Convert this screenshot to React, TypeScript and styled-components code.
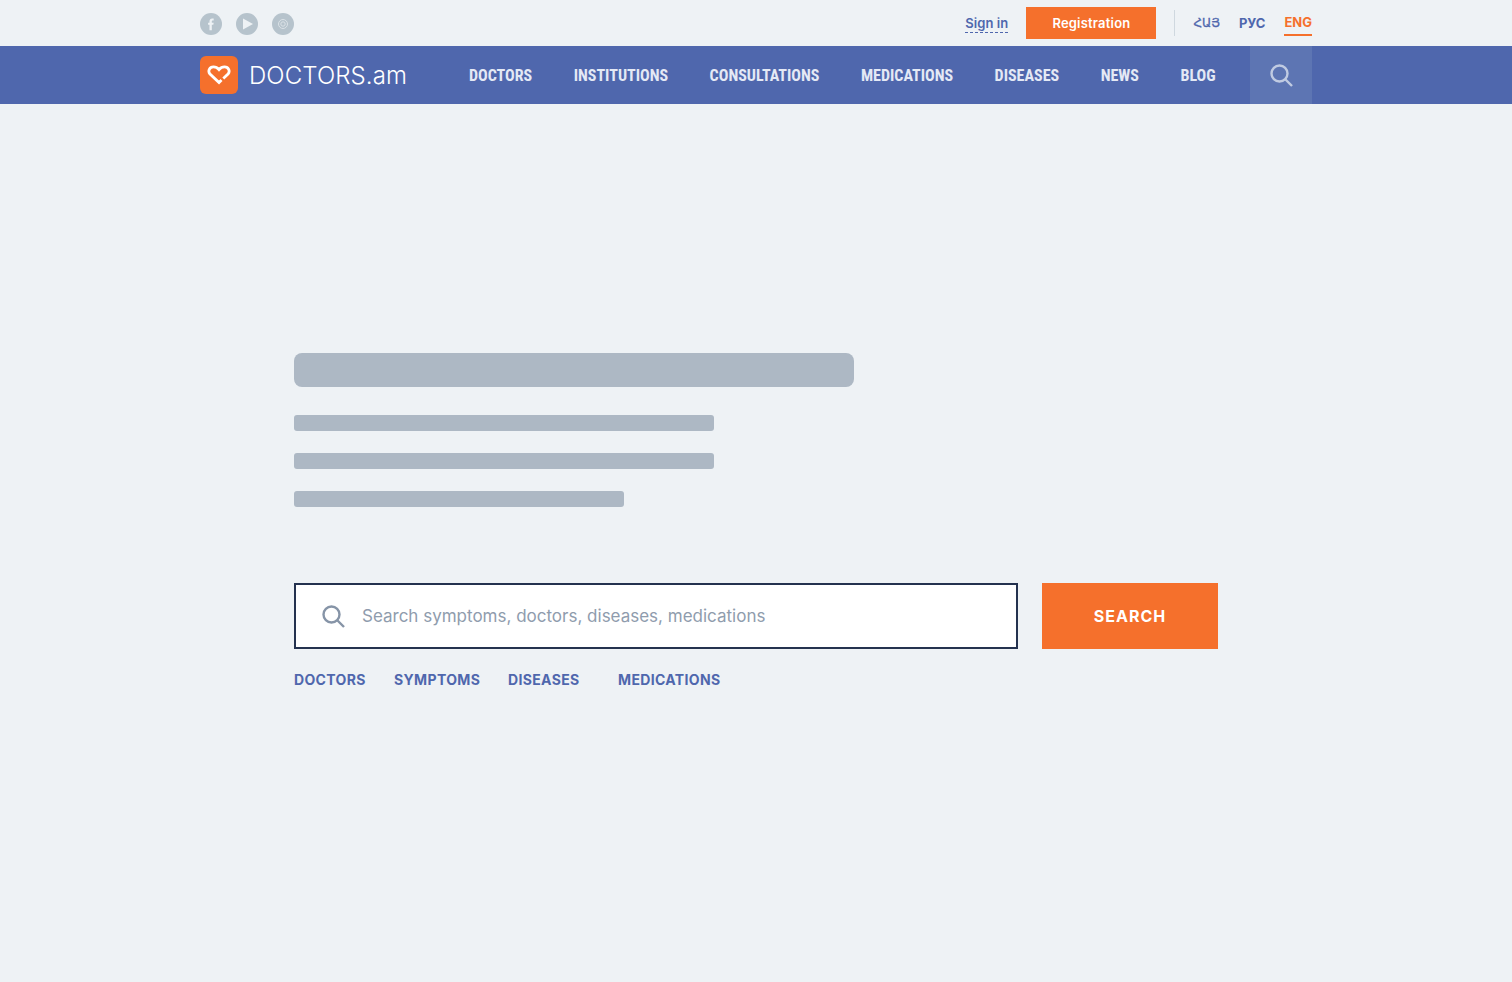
import React from 'react'
import styled, { createGlobalStyle } from 'styled-components'

const GlobalStyle = createGlobalStyle`
  html, body {
    margin: 0;
    padding: 0;
    height: 100%;
    background: #eef2f5;
    font-family: Inter, "Noto Sans", sans-serif;
  }
`

const Page = styled.div`
  min-height: 982px;
  background: #eef2f5;
`

const Container = styled.div`
  width: 1112px;
  margin: 0 auto;
  display: flex;
  align-items: center;
  height: 100%;
`

const TopBar = styled.div`
  height: 46px;
`

const Socials = styled.div`
  display: flex;
  gap: 14px;
  margin-right: auto;
  padding-top: 2px;
`

const Social = styled.a`
  width: 22px;
  height: 22px;
  border-radius: 50%;
  background: #b6c3cc;
  display: flex;
  align-items: center;
  justify-content: center;
`

const SignIn = styled.a`
  font-size: 13px;
  font-weight: 600;
  line-height: 16px;
  letter-spacing: 0.1px;
  padding: 2px 0 1px;
  color: #4f67ad;
  border-bottom: 1px dashed #4f67ad;
  margin-right: 18px;
`

const Register = styled.a`
  width: 130px;
  height: 32px;
  margin-right: 18px;
  background: #f5702c;
  color: #fff;
  font-size: 13px;
  font-weight: 600;
  letter-spacing: 0.2px;
  display: flex;
  align-items: center;
  justify-content: center;
`

const Divider = styled.div`
  width: 1px;
  height: 26px;
  background: #cfd8df;
  margin-right: 18px;
`

const Langs = styled.div`
  display: flex;
  align-items: center;
  gap: 19px;
`

const Lang = styled.a<{ $active?: boolean }>`
  font-size: 13px;
  font-weight: 700;
  line-height: 16px;
  padding: ${p => (p.$active ? '4px' : '6px')} 0 4px;
  color: ${p => (p.$active ? '#f5702c' : '#4f67ad')};
  border-bottom: 2px solid ${p => (p.$active ? '#f5702c' : 'transparent')};
  font-family: Inter, "Noto Sans", sans-serif;
`

const ArmenianLang = styled(Lang)`
  font-family: "DejaVu Sans", sans-serif;
  font-weight: 400;
  font-size: 12px;
  -webkit-text-stroke: 0.3px #4f67ad;
`

const NavBar = styled.div`
  height: 58px;
  background: #4f67ad;
`

const Logo = styled.a`
  display: flex;
  align-items: center;
  gap: 11px;
  width: 269px;
  color: #fff;
  font-size: 24px;
  font-weight: 300;
  letter-spacing: 0.1px;
`

const LogoMark = styled.span`
  width: 38px;
  height: 38px;
  border-radius: 6px;
  background: #f5702c;
  display: flex;
  align-items: center;
  justify-content: center;
`

const Menu = styled.nav`
  display: flex;
  gap: 41.5px;
  margin-right: auto;
  padding-top: 1px;
`

const MenuItem = styled.a`
  font-family: Roboto, "Liberation Sans", sans-serif;
  font-size: 16px;
  font-weight: 700;
  font-stretch: condensed;
  color: #e4e9f5;
`

const SearchToggle = styled.button`
  width: 62px;
  height: 58px;
  border: 0;
  padding: 0;
  background: #5d75b3;
  display: flex;
  align-items: center;
  justify-content: center;
`

const Main = styled.main`
  width: 924px;
  margin: 0 auto;
  padding-top: 249px;
`

const Skeleton = styled.div<{ $w: number; $h: number; $r: number; $mb: number }>`
  width: ${p => p.$w}px;
  height: ${p => p.$h}px;
  border-radius: ${p => p.$r}px;
  margin-bottom: ${p => p.$mb}px;
  background: #adb8c4;
`

const SearchRow = styled.form`
  display: flex;
  gap: 24px;
  margin-top: 76px;
`

const SearchBox = styled.label`
  box-sizing: border-box;
  width: 724px;
  height: 66px;
  border: 2px solid #24324f;
  background: #fff;
  display: flex;
  align-items: center;
  padding-left: 26px;
  gap: 17px;
`

const SearchInput = styled.input`
  flex: 1;
  border: 0;
  outline: 0;
  background: none;
  padding: 0 0 1px;
  font-family: Inter, sans-serif;
  font-size: 17px;
  font-weight: 400;
  color: #24324f;
  &::placeholder {
    color: #8f9cad;
    opacity: 1;
  }
`

const SearchButton = styled.button`
  width: 176px;
  height: 66px;
  border: 0;
  background: #f5702c;
  color: #fff;
  font-family: Inter, sans-serif;
  font-size: 16px;
  font-weight: 700;
  letter-spacing: 1px;
`

const QuickLinks = styled.div`
  display: flex;
  margin-top: 22px;
`

const QuickLink = styled.a<{ $w: number }>`
  width: ${p => p.$w}px;
  font-size: 14px;
  font-weight: 700;
  line-height: 18px;
  letter-spacing: 0.35px;
  color: #4f67ad;
`

const nav = ['DOCTORS', 'INSTITUTIONS', 'CONSULTATIONS', 'MEDICATIONS', 'DISEASES', 'NEWS', 'BLOG']

const App: React.FC = () => (
  <Page>
    <GlobalStyle />
    <TopBar>
      <Container>
        <Socials>
          <Social>
            <svg width="14" height="14" viewBox="0 0 12 12" fill="#eef2f5">
              <path d="M4.7 11.4V6.6H3.5V4.9H4.7V3.7C4.7 2.2 5.6 1.2 7 1.2H8.3V3H7.5C6.9 3 6.7 3.3 6.7 3.8V4.9H8.3L8 6.6H6.7V11.4Z" />
            </svg>
          </Social>
          <Social>
            <svg width="14" height="14" viewBox="0 0 14 14" fill="#eef2f5">
              <path d="M3 1.5L13 7L3 12.5Z" />
            </svg>
          </Social>
          <Social>
            <svg width="12" height="12" viewBox="0 0 12 12" fill="none" stroke="#dbe2e7" strokeWidth="1">
              <circle cx="6" cy="6" r="4.5" />
              <circle cx="6" cy="6" r="2.2" />
            </svg>
          </Social>
        </Socials>
        <SignIn>Sign in</SignIn>
        <Register>Registration</Register>
        <Divider />
        <Langs>
          <ArmenianLang>ՀԱՅ</ArmenianLang>
          <Lang>РУС</Lang>
          <Lang $active>ENG</Lang>
        </Langs>
      </Container>
    </TopBar>
    <NavBar>
      <Container>
        <Logo>
          <LogoMark>
            <svg width="24" height="20" viewBox="0 0 24 20" fill="none" stroke="#fff" strokeWidth="2.8">
              <path d="M14.5 15L12 17.6L3 9C0.5 6 2.5 1.8 6.5 1.8C8.8 1.8 10.6 2.9 12 4.6C13.4 2.9 15.2 1.8 17.5 1.8C21.5 1.8 23.5 6 21 9L16.3 13.4" />
            </svg>
          </LogoMark>
          DOCTORS.am
        </Logo>
        <Menu>
          {nav.map(item => (
            <MenuItem key={item}>{item}</MenuItem>
          ))}
        </Menu>
        <SearchToggle aria-label="Search">
          <svg width="24" height="24" viewBox="0 0 24 24" fill="none" stroke="#c0cbe2" strokeWidth="2.4">
            <circle cx="10.5" cy="10.5" r="8" />
            <path d="M16.5 16.5L23 23" />
          </svg>
        </SearchToggle>
      </Container>
    </NavBar>
    <Main>
      <Skeleton $w={560} $h={34} $r={8} $mb={28} />
      <Skeleton $w={420} $h={16} $r={3} $mb={22} />
      <Skeleton $w={420} $h={16} $r={3} $mb={22} />
      <Skeleton $w={330} $h={16} $r={3} $mb={0} />
      <SearchRow onSubmit={e => e.preventDefault()}>
        <SearchBox>
          <svg width="23" height="23" viewBox="0 0 23 23" fill="none" stroke="#8694a7" strokeWidth="2.4">
            <circle cx="9.5" cy="9.5" r="8" />
            <path d="M15.5 15.5L22 22" />
          </svg>
          <SearchInput placeholder="Search symptoms, doctors, diseases, medications" />
        </SearchBox>
        <SearchButton>SEARCH</SearchButton>
      </SearchRow>
      <QuickLinks>
        <QuickLink $w={100}>DOCTORS</QuickLink>
        <QuickLink $w={114}>SYMPTOMS</QuickLink>
        <QuickLink $w={110}>DISEASES</QuickLink>
        <QuickLink $w={120}>MEDICATIONS</QuickLink>
      </QuickLinks>
    </Main>
  </Page>
)

export default App
